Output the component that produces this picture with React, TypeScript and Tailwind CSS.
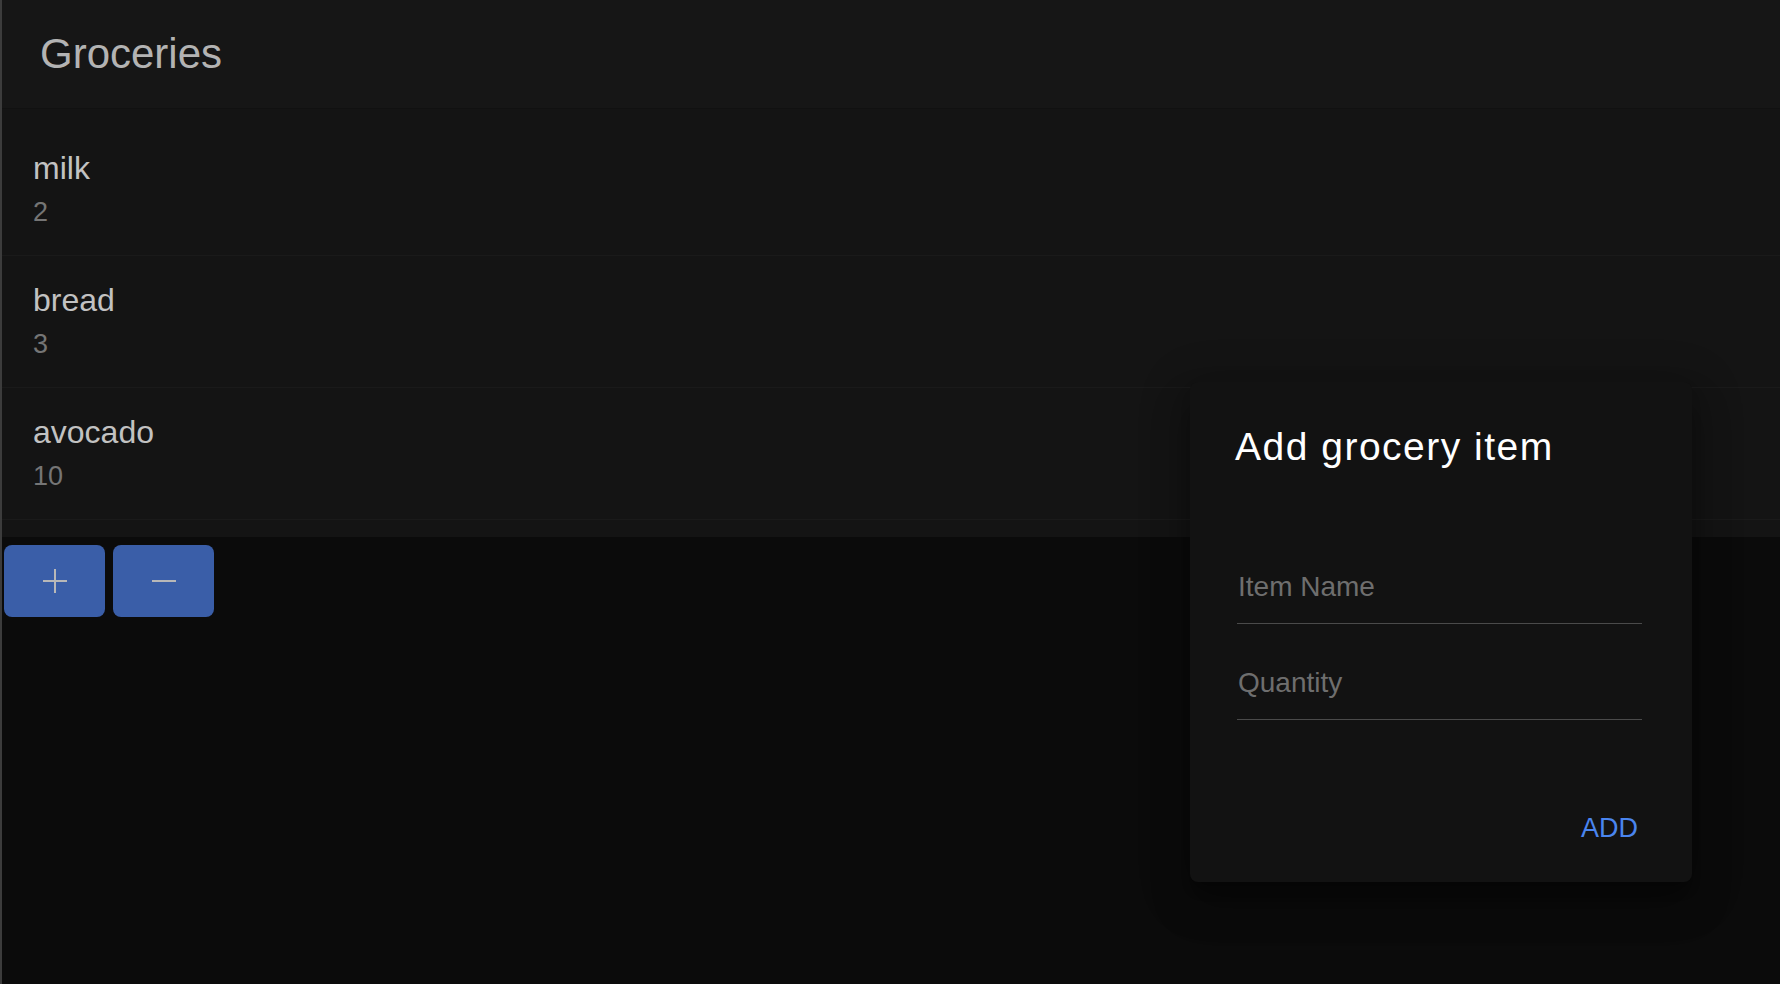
import React from "react";

const items = [
  { name: "milk", qty: "2" },
  { name: "bread", qty: "3" },
  { name: "avocado", qty: "10" },
];

export default function App() {
  return (
    <div
      className="relative h-screen w-full overflow-hidden border-l-2 border-[#3c3c3c] bg-[#0b0b0b]"
      style={{ fontFamily: '"Liberation Sans", Arial, sans-serif' }}
    >
      <header className="h-[109px] border-b border-[#111111] bg-[#161616] pl-[38px] pt-[30px]">
        <h1 className="text-[42px] leading-[48px] text-[#b3b3b3]">Groceries</h1>
      </header>
      <ul className="bg-[#141414] pt-[15px] pb-[17px]">
        {items.map((it) => (
          <li
            key={it.name}
            className="box-border h-[132px] border-b border-[#1a1a1a] pl-[31px] pt-[26px]"
          >
            <div className="text-[32px] leading-[36px] text-[#c2c2c2]">{it.name}</div>
            <div className="mt-[10px] text-[27px] leading-[32px] text-[#757575]">{it.qty}</div>
          </li>
        ))}
      </ul>
      <div className="flex gap-2 pl-[2px] pt-[8px]">
        <button className="flex h-[72px] w-[101px] items-center justify-center rounded-[8px] bg-[#3a5ea8]">
          <svg width="26" height="26" viewBox="0 0 26 26">
            <path d="M13 1V25M1 13H25" stroke="#b8b8b8" strokeWidth="2" />
          </svg>
        </button>
        <button className="flex h-[72px] w-[101px] items-center justify-center rounded-[8px] bg-[#3a5ea8]">
          <svg width="26" height="26" viewBox="0 0 26 26">
            <path d="M1 13H25" stroke="#b8b8b8" strokeWidth="2" />
          </svg>
        </button>
      </div>

      <div className="absolute left-[1188px] top-[382px] box-border flex h-[500px] w-[502px] flex-col rounded-[8px] bg-[#121212] pl-[45px] pr-[50px] pt-[43px] shadow-[0_11px_15px_-7px_rgba(0,0,0,0.3),0_24px_38px_3px_rgba(0,0,0,0.2),0_9px_46px_8px_rgba(0,0,0,0.18)]">
        <h2 className="text-[39px] leading-[44px] tracking-[1.5px] text-white">Add grocery item</h2>
        <div className="ml-[2px] mt-[100px] border-b border-[#4a4a4a] pb-[18px]">
          <div className="pl-[1px] text-[28px] leading-[36px] text-[#6e6e6e]">Item Name</div>
        </div>
        <div className="ml-[2px] mt-[41px] border-b border-[#4a4a4a] pb-[18px]">
          <div className="pl-[1px] text-[28px] leading-[36px] text-[#6e6e6e]">Quantity</div>
        </div>
        <div className="mt-[93px] flex justify-end pr-[4px]">
          <span className="text-[27px] leading-[30px] text-[#4a85ef]">ADD</span>
        </div>
      </div>
    </div>
  );
}
